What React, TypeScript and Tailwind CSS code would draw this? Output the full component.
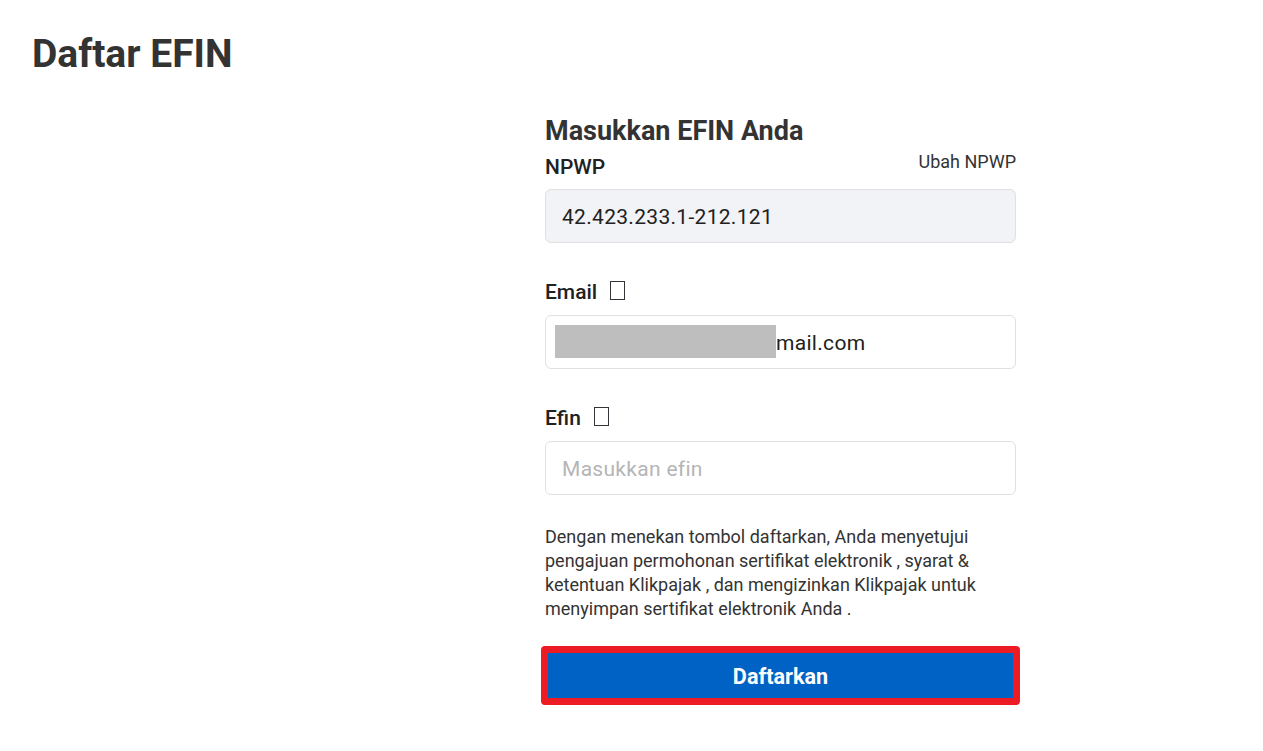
function MissingGlyph() {
  return <span className="ml-[13px] -mt-[3px] inline-block h-[19px] w-[15px] border border-[#33333a]" />;
}

function App() {
  return (
    <div className="min-h-screen bg-white font-['Roboto',sans-serif] text-[#333333]">
      <div className="pl-[32px] pt-[30px]">
        <h1 className="text-[39px] font-bold leading-[48px]">Daftar EFIN</h1>
      </div>

      <div className="ml-[545px] mt-[37px] w-[471px]">
        <h2 className="text-[27px] font-bold leading-[32px]">Masukkan EFIN Anda</h2>

        <div className="mt-[8px] flex items-start justify-between">
          <label className="text-[21px] font-medium leading-[24px] text-[#212121]">NPWP</label>
          <span className="-mt-[5px] text-[18px] leading-[24px]">Ubah NPWP</span>
        </div>
        <div className="mt-[10px] flex h-[54px] items-center rounded-md border border-[#e0e0e0] bg-[#f2f3f7] px-[16px] pt-[4px] text-[21px] tracking-[0.3px] text-[#212121]">
          42.423.233.1-212.121
        </div>

        <div className="mt-[37px] flex h-[24px] items-center">
          <label className="text-[21px] font-medium leading-[24px] text-[#212121]">Email</label>
          <MissingGlyph />
        </div>
        <div className="mt-[11px] flex h-[54px] items-center rounded-md border border-[#e0e0e0] pl-[9px] text-[21px] tracking-[0.3px] text-[#212121]">
          <span className="-mt-[2px] h-[33px] w-[221px] bg-[#bebebe]" />
          <span className="pt-[4px]">mail.com</span>
        </div>

        <div className="mt-[37px] flex h-[24px] items-center">
          <label className="text-[21px] font-medium leading-[24px] text-[#212121]">Efin</label>
          <MissingGlyph />
        </div>
        <div className="mt-[11px] flex h-[54px] items-center rounded-md border border-[#e0e0e0] px-[16px] pt-[4px] text-[21px] tracking-[0.3px] text-[#b5b5b5]">
          Masukkan efin
        </div>

        <p className="mt-[30px] text-[18px] leading-[24px]">
          Dengan menekan tombol daftarkan, Anda menyetujui pengajuan permohonan sertifikat elektronik , syarat &amp; ketentuan Klikpajak , dan mengizinkan Klikpajak untuk menyimpan sertifikat elektronik Anda .
        </p>

        <button className="-mx-1 mt-[25px] block h-[59px] w-[479px] rounded-[4px] border-[7px] border-[#ed1c24] bg-[#0062c4] pt-[4px] text-[21.6px] font-bold text-white">
          Daftarkan
        </button>
      </div>
    </div>
  );
}

export default App;
